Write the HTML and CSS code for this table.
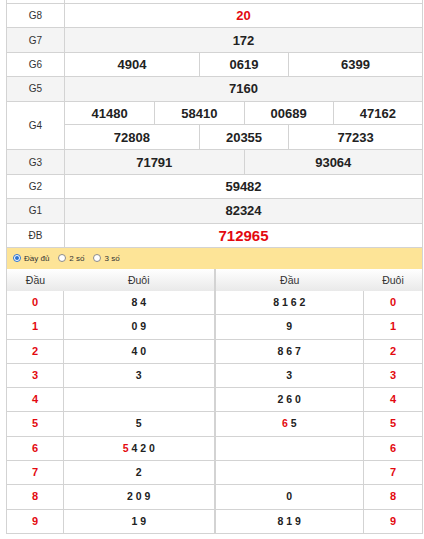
FILE: index.html
```html
<!DOCTYPE html>
<html lang="vi">
<head>
<meta charset="utf-8">
<title>KQXS</title>
<link rel="stylesheet" href="styles.css">
</head>
<body>
<div class="page">
  <div class="stub"><div class="lbl"></div><div></div></div>
  <div class="row"><div class="lbl">G8</div><div class="val red">20</div></div>
  <div class="row alt"><div class="lbl">G7</div><div class="val">172</div></div>
  <div class="row"><div class="lbl">G6</div><div class="vals c3"><span>4904</span><span>0619</span><span>6399</span></div></div>
  <div class="row alt"><div class="lbl">G5</div><div class="val">7160</div></div>
  <div class="row g4"><div class="lbl">G4</div>
    <div class="multi">
      <div class="vals c4"><span>41480</span><span>58410</span><span>00689</span><span>47162</span></div>
      <div class="vals c3"><span>72808</span><span>20355</span><span>77233</span></div>
    </div>
  </div>
  <div class="row alt"><div class="lbl">G3</div><div class="vals c2"><span>71791</span><span>93064</span></div></div>
  <div class="row"><div class="lbl">G2</div><div class="val">59482</div></div>
  <div class="row alt"><div class="lbl">G1</div><div class="val">82324</div></div>
  <div class="row"><div class="lbl">ĐB</div><div class="val red big">712965</div></div>

  <div class="opts">
    <label class="opt"><span class="rdo on"></span>Đầy đủ</label>
    <label class="opt"><span class="rdo"></span>2 số</label>
    <label class="opt"><span class="rdo"></span>3 số</label>
  </div>

  <div class="loto">
    <div class="lt lt-left">
      <div class="lhead"><span>Đầu</span><span>Đuôi</span></div>
      <div class="lrow"><span class="k">0</span><span>8 4</span></div>
      <div class="lrow"><span class="k">1</span><span>0 9</span></div>
      <div class="lrow"><span class="k">2</span><span>4 0</span></div>
      <div class="lrow"><span class="k">3</span><span>3</span></div>
      <div class="lrow"><span class="k">4</span><span></span></div>
      <div class="lrow"><span class="k">5</span><span>5</span></div>
      <div class="lrow"><span class="k">6</span><span><em>5</em> 4 2 0</span></div>
      <div class="lrow"><span class="k">7</span><span>2</span></div>
      <div class="lrow"><span class="k">8</span><span>2 0 9</span></div>
      <div class="lrow"><span class="k">9</span><span>1 9</span></div>
    </div>
    <div class="lt lt-right">
      <div class="lhead"><span>Đầu</span><span>Đuôi</span></div>
      <div class="lrow"><span>8 1 6 2</span><span class="k">0</span></div>
      <div class="lrow"><span>9</span><span class="k">1</span></div>
      <div class="lrow"><span>8 6 7</span><span class="k">2</span></div>
      <div class="lrow"><span>3</span><span class="k">3</span></div>
      <div class="lrow"><span>2 6 0</span><span class="k">4</span></div>
      <div class="lrow"><span><em>6</em> 5</span><span class="k">5</span></div>
      <div class="lrow"><span></span><span class="k">6</span></div>
      <div class="lrow"><span></span><span class="k">7</span></div>
      <div class="lrow"><span>0</span><span class="k">8</span></div>
      <div class="lrow"><span>8 1 9</span><span class="k">9</span></div>
    </div>
  </div>
</div>
</body>
</html>
```
FILE: styles.css
```css
* { box-sizing: border-box; }
body {
  margin: 0;
  font-family: "Liberation Sans", Arial, sans-serif;
  color: #222;
  background: #fff;
}
.page {
  margin-left: 6px;
  width: 417px;
  border-left: 1px solid #d3d3d3;
  border-right: 1px solid #d3d3d3;
}
.stub {
  display: grid;
  grid-template-columns: 58px 1fr;
  height: 4px;
  border-bottom: 1px solid #d3d3d3;
}
.stub .lbl { border-right: 1px solid #d3d3d3; }
.row {
  display: grid;
  grid-template-columns: 58px 1fr;
  height: 24.4px;
  border-bottom: 1px solid #d3d3d3;
}
.row.alt { background: #f4f4f4; }
.row.g4 { height: 48.8px; }
.lbl {
  border-right: 1px solid #d3d3d3;
  display: flex;
  align-items: center;
  justify-content: center;
  font-size: 10px;
  color: #333;
}
.val {
  display: flex;
  align-items: center;
  justify-content: center;
  font-size: 13px;
  font-weight: bold;
}
.red { color: #e3090f; }
.big { font-size: 15px; }
.multi {
  display: grid;
  grid-template-rows: 1fr 1fr;
}
.multi .vals:first-child { border-bottom: 1px solid #d3d3d3; }
.vals {
  display: grid;
  font-size: 13px;
  font-weight: bold;
}
.vals span {
  display: flex;
  align-items: center;
  justify-content: center;
  border-left: 1px solid #d3d3d3;
}
.vals span:first-child { border-left: 0; }
.c2 { grid-template-columns: 1fr 1fr; }
.c3 { grid-template-columns: 3fr 2fr 3fr; }
.c4 { grid-template-columns: 1fr 1fr 1fr 1fr; }

.opts {
  height: 21px;
  background: #fde497;
  display: flex;
  align-items: center;
  gap: 9px;
  padding-left: 6px;
  font-size: 8px;
  color: #333;
}
.opt {
  display: flex;
  align-items: center;
  gap: 3px;
}
.rdo {
  width: 8px;
  height: 8px;
  border-radius: 50%;
  border: 1px solid #8a8a8a;
  background: #fff;
  position: relative;
}
.rdo.on { border-color: #2a72d0; }
.rdo.on::after {
  content: "";
  position: absolute;
  left: 1px;
  top: 1px;
  width: 4px;
  height: 4px;
  border-radius: 50%;
  background: #2a72d0;
}

.loto {
  display: grid;
  grid-template-columns: 1fr 1fr;
}
.lt-left { border-right: 1px solid #d3d3d3; }
.lt-right { border-left: 1px solid #d3d3d3; }
.lhead {
  display: grid;
  height: 22px;
  background: linear-gradient(#ffffff, #e9e9e9);
  font-size: 10.5px;
  color: #333;
}
.lhead span {
  display: flex;
  align-items: center;
  justify-content: center;
}
.lt-left .lhead, .lt-left .lrow { grid-template-columns: 57px 1fr; }
.lt-right .lhead, .lt-right .lrow { grid-template-columns: 1fr 58px; }
.lrow {
  display: grid;
  height: 24.3px;
  border-bottom: 1px solid #d3d3d3;
  font-size: 10.5px;
  font-weight: bold;
}
.lrow span {
  display: block;
  text-align: center;
  line-height: 23.3px;
}
.lt-left .lrow span:first-child { border-right: 1px solid #d3d3d3; }
.lt-right .lrow span:first-child { border-right: 1px solid #d3d3d3; }
.k { color: #e3090f; font-size: 11px; }
em { font-style: normal; color: #e3090f; }
```
